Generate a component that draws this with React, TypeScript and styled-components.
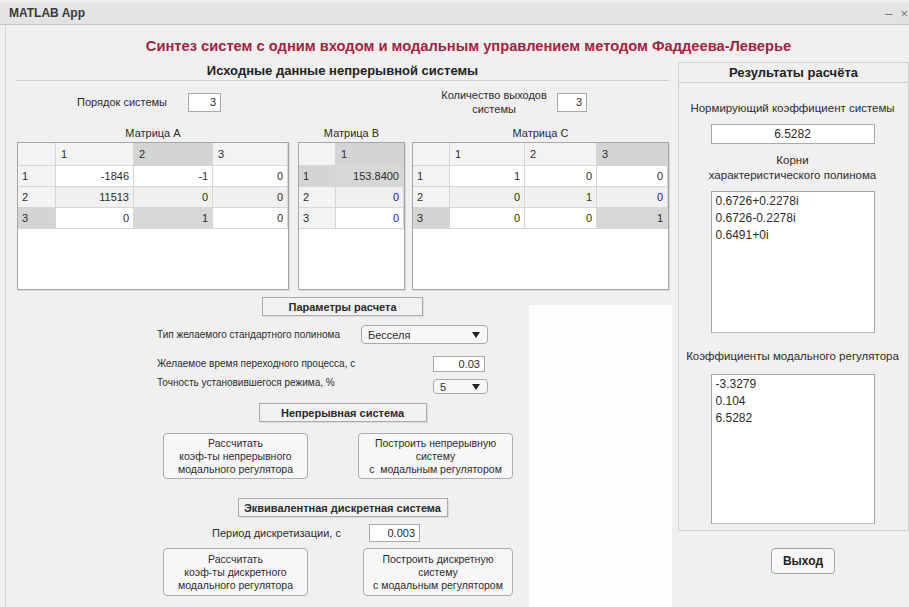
import styled, { createGlobalStyle } from "styled-components";

const GlobalStyle = createGlobalStyle`
  html, body {
    margin: 0;
    padding: 0;
    background: #f0f0f0;
  }
  body {
    font-family: "Liberation Sans", Arial, sans-serif;
    color: #262626;
  }
`;

type MatrixProps = {
  title: string;
  widths: number[];
  values: string[][];
  sel: [number, number];
};

const matrixA = [
  ["-1846", "-1", "0"],
  ["11513", "0", "0"],
  ["0", "1", "0"],
];
const matrixB = [["153.8400"], ["0"], ["0"]];
const matrixC = [
  ["1", "0", "0"],
  ["0", "1", "0"],
  ["0", "0", "1"],
];

const roots = ["0.6726+0.2278i", "0.6726-0.2278i", "0.6491+0i"];
const gains = ["-3.3279", "0.104", "6.5282"];

function Matrix({ title, widths, values, sel }: MatrixProps) {
  const cols = widths.map((w) => `${w}px`).join(" ");
  return (
    <MatrixBlock>
      <MatrixTitle>{title}</MatrixTitle>
      <TableBox $w={widths.reduce((a, b) => a + b, 0) + 2}>
        <TableGrid $cols={cols}>
          <HeadCell $hl={false} />
          {values[0].map((_, c) => (
            <HeadCell key={c} $hl={sel[1] === c}>
              {c + 1}
            </HeadCell>
          ))}
          {values.map((row, r) => (
            <RowFragment key={r}>
              <RowHead $hl={sel[0] === r}>{r + 1}</RowHead>
              {row.map((v, c) => (
                <DataCell
                  key={c}
                  $striped={r % 2 === 1}
                  $hl={sel[0] === r && sel[1] === c}
                >
                  {v}
                </DataCell>
              ))}
            </RowFragment>
          ))}
        </TableGrid>
      </TableBox>
    </MatrixBlock>
  );
}

export default function App() {
  return (
    <Window>
      <GlobalStyle />
      <TitleBar>
        <span>MATLAB App</span>
        <WinControls>
          <span>–</span>
          <span>×</span>
        </WinControls>
      </TitleBar>
      <Body>
        <AppTitle>
          Синтез систем с одним входом и модальным управлением методом
          Фаддеева-Леверье
        </AppTitle>
        <Columns>
          <LeftPanel>
            <LeftHeader>Исходные данные непрерывной системы</LeftHeader>
            <SizeRow>
              <Label>Порядок системы</Label>
              <NumField $w={33} $ml={21}>
                3
              </NumField>
              <TwoLineLabel>
                Количество выходов
                <br />
                системы
              </TwoLineLabel>
              <NumField $w={30} $ml={8}>
                3
              </NumField>
            </SizeRow>
            <MatrixRow>
              <Matrix
                title="Матрица A"
                widths={[38, 78, 79, 75]}
                values={matrixA}
                sel={[2, 1]}
              />
              <Matrix
                title="Матрица B"
                widths={[37, 68]}
                values={matrixB}
                sel={[0, 0]}
              />
              <Matrix
                title="Матрица C"
                widths={[37, 75, 72, 71]}
                values={matrixC}
                sel={[2, 2]}
              />
            </MatrixRow>

            <SectionTag $w={161} $mt={7}>
              Параметры расчета
            </SectionTag>
            <FormRow $mt={9} $h={19}>
              <Label $small>Тип желаемого стандартного полинома</Label>
              <Dropdown $w={127} $h={19}>
                Бесселя
                <Caret />
              </Dropdown>
            </FormRow>
            <FormRow $mt={12} $h={16}>
              <Label $small>Желаемое время переходного процесса, с</Label>
              <NumField $w={52} $h={16} $mr={3}>
                0.03
              </NumField>
            </FormRow>
            <FormRow $mt={4} $h={18}>
              <Label $small $top>
                Точность установившегося режима, %
              </Label>
              <Dropdown $w={55} $h={15}>
                5
                <Caret />
              </Dropdown>
            </FormRow>

            <SectionTag $w={168} $mt={9}>
              Непрерывная система
            </SectionTag>
            <ButtonRow $mt={11}>
              <ActionButton $w={145} $h={46}>
                Рассчитать
                <br />
                коэф-ты непрерывного
                <br />
                модального регулятора
              </ActionButton>
              <ActionButton $w={155} $h={46} $ml={50}>
                Построить непрерывную
                <br />
                систему
                <br />с&nbsp; модальным регулятором
              </ActionButton>
            </ButtonRow>

            <SectionTag $w={210} $mt={19}>
              Эквивалентная дискретная система
            </SectionTag>
            <PeriodRow>
              <Label>Период дискретизации, с</Label>
              <NumField $w={51} $h={18} $ml={29}>
                0.003
              </NumField>
            </PeriodRow>
            <ButtonRow $mt={6}>
              <ActionButton $w={145} $h={48}>
                Рассчитать
                <br />
                коэф-ты дискретного
                <br />
                модального регулятора
              </ActionButton>
              <ActionButton $w={150} $h={48} $ml={55}>
                Построить дискретную
                <br />
                систему
                <br />с модальным регулятором
              </ActionButton>
            </ButtonRow>
          </LeftPanel>

          <RightColumn>
            <ResultsPanel>
              <ResultsHeader>Результаты расчёта</ResultsHeader>
              <ResultLabel $mt={18}>Нормирующий коэффициент системы</ResultLabel>
              <ValueField>6.5282</ValueField>
              <ResultLabel $mt={9}>
                Корни
                <br />
                характеристического полинома
              </ResultLabel>
              <ListBox $h={142} $mt={8}>
                {roots.map((r) => (
                  <ListItem key={r}>{r}</ListItem>
                ))}
              </ListBox>
              <ResultLabel $mt={16}>Коэффициенты модального регулятора</ResultLabel>
              <ListBox $h={150} $mt={10}>
                {gains.map((g) => (
                  <ListItem key={g}>{g}</ListItem>
                ))}
              </ListBox>
            </ResultsPanel>
            <ExitButton>Выход</ExitButton>
          </RightColumn>
        </Columns>
      </Body>
      <BlankPatch />
    </Window>
  );
}

const Window = styled.div`
  position: relative;
  width: 909px;
  height: 607px;
  overflow: hidden;
  display: flex;
  flex-direction: column;
  background: #f0f0f0;
`;

const TitleBar = styled.div`
  flex: none;
  box-sizing: border-box;
  height: 25px;
  padding: 2px 0 0 9px;
  display: flex;
  align-items: center;
  justify-content: space-between;
  background: linear-gradient(#f0f0f0, #e4e4e4 20%, #e2e2e2);
  border-bottom: 1px solid #c4c4c4;
  font-size: 12px;
  font-weight: bold;
  color: #3a3a3a;
`;

const WinControls = styled.div`
  display: flex;
  gap: 8px;
  margin-right: 1px;
  font-size: 13px;
  font-weight: normal;
  color: #777;
`;

const Body = styled.div`
  flex: 1;
  margin-left: 5px;
  padding-left: 10px;
  border-left: 1px solid #d6d6d6;
  display: flex;
  flex-direction: column;
`;

const AppTitle = styled.div`
  margin-top: 11px;
  height: 20px;
  line-height: 20px;
  text-align: center;
  padding-left: 12px;
  font-size: 14.7px;
  font-weight: bold;
  color: #a6223f;
  white-space: nowrap;
`;

const Columns = styled.div`
  margin-top: 6px;
  display: flex;
  gap: 9px;
`;

const LeftPanel = styled.div`
  width: 655px;
  display: flex;
  flex-direction: column;
`;

const LeftHeader = styled.div`
  height: 18px;
  line-height: 18px;
  text-align: center;
  font-size: 13px;
  font-weight: bold;
  color: #222;
  border-bottom: 1px solid #cfcfcf;
`;

const Label = styled.span<{ $top?: boolean; $small?: boolean }>`
  font-size: ${(p) => (p.$small ? 10 : 11)}px;
  line-height: 14px;
  color: #2c2c2c;
  white-space: nowrap;
  align-self: ${(p) => (p.$top ? "flex-start" : "center")};
`;

const SizeRow = styled.div`
  margin-top: 11px;
  height: 20px;
  padding-left: 61px;
  display: flex;
  align-items: center;
`;

const TwoLineLabel = styled.div`
  width: 110px;
  margin-left: 218px;
  font-size: 11px;
  line-height: 14px;
  text-align: center;
  color: #2c2c2c;
`;

const NumField = styled.div<{ $w: number; $h?: number; $ml?: number; $mr?: number }>`
  box-sizing: border-box;
  width: ${(p) => p.$w}px;
  height: ${(p) => p.$h ?? 19}px;
  margin-left: ${(p) => p.$ml ?? 0}px;
  margin-right: ${(p) => p.$mr ?? 0}px;
  padding-right: 4px;
  display: flex;
  align-items: center;
  justify-content: flex-end;
  background: #fff;
  border: 1px solid #a9a9a9;
  font-size: 11px;
  color: #2c2c2c;
`;

const MatrixRow = styled.div`
  margin-top: 14px;
  padding-left: 1px;
  display: flex;
  gap: 9px;
  & > div:last-child {
    margin-left: -2px;
  }
`;

const MatrixBlock = styled.div`
  display: flex;
  flex-direction: column;
  gap: 2px;
`;

const MatrixTitle = styled.div`
  height: 14px;
  line-height: 14px;
  text-align: center;
  font-size: 11px;
  color: #2c2c2c;
`;

const TableBox = styled.div<{ $w: number }>`
  box-sizing: border-box;
  width: ${(p) => p.$w}px;
  height: 148px;
  background: #fff;
  border: 1px solid #a6a6a6;
  box-shadow: 1px 1px 0 #d9d9d9;
`;

const TableGrid = styled.div<{ $cols: string }>`
  display: grid;
  grid-template-columns: ${(p) => p.$cols};
  grid-template-rows: 23px repeat(3, 21px);
  font-size: 11px;
  color: #2c2c2c;
`;

const RowFragment = styled.div`
  display: contents;
`;

const cellBase = `
  box-sizing: border-box;
  display: flex;
  align-items: center;
  border-right: 1px solid #d6d6d6;
  border-bottom: 1px solid #d6d6d6;
  white-space: nowrap;
  overflow: hidden;
`;

const HeadCell = styled.div<{ $hl: boolean }>`
  ${cellBase}
  padding-left: 5px;
  background: ${(p) => (p.$hl ? "#d4d4d4" : "#f3f3f3")};
`;

const RowHead = styled.div<{ $hl: boolean }>`
  ${cellBase}
  padding-left: 4px;
  background: ${(p) => (p.$hl ? "#d4d4d4" : "#f3f3f3")};
`;

const DataCell = styled.div<{ $striped: boolean; $hl: boolean }>`
  ${cellBase}
  justify-content: flex-end;
  padding-right: 4px;
  background: ${(p) => (p.$hl ? "#d7d7d7" : p.$striped ? "#f0f0f0" : "#fff")};
`;

const SectionTag = styled.div<{ $w: number; $mt: number }>`
  box-sizing: border-box;
  align-self: center;
  width: ${(p) => p.$w}px;
  height: 19px;
  margin-top: ${(p) => p.$mt}px;
  display: flex;
  align-items: center;
  justify-content: center;
  background: #f2f2f2;
  border: 1px solid #ababab;
  box-shadow: 1px 1px 0 #dcdcdc;
  font-size: 11px;
  font-weight: bold;
  color: #2a2a2a;
`;

const FormRow = styled.div<{ $mt: number; $h: number }>`
  width: 331px;
  height: ${(p) => p.$h}px;
  margin-top: ${(p) => p.$mt}px;
  margin-left: 141px;
  display: flex;
  align-items: center;
  justify-content: space-between;
`;

const Dropdown = styled.div<{ $w: number; $h: number }>`
  box-sizing: border-box;
  width: ${(p) => p.$w}px;
  height: ${(p) => p.$h}px;
  padding: 0 7px 0 6px;
  display: flex;
  align-items: center;
  justify-content: space-between;
  align-self: flex-end;
  background: #f6f6f6;
  border: 1px solid #a9a9a9;
  border-radius: 4px;
  font-size: 11px;
  color: #2c2c2c;
`;

const Caret = styled.span`
  width: 0;
  height: 0;
  border-left: 4px solid transparent;
  border-right: 4px solid transparent;
  border-top: 6px solid #222;
`;

const ButtonRow = styled.div<{ $mt: number }>`
  margin-top: ${(p) => p.$mt}px;
  margin-left: 147px;
  display: flex;
`;

const ActionButton = styled.button<{ $w: number; $h: number; $ml?: number }>`
  box-sizing: border-box;
  width: ${(p) => p.$w}px;
  height: ${(p) => p.$h}px;
  margin-left: ${(p) => p.$ml ?? 0}px;
  padding: 0;
  background: #f7f7f7;
  border: 1px solid #acacac;
  border-radius: 4px;
  font-family: inherit;
  font-size: 10.5px;
  line-height: 13px;
  color: #2c2c2c;
  text-align: center;
`;

const PeriodRow = styled.div`
  margin-top: 7px;
  margin-left: 196px;
  height: 18px;
  display: flex;
  align-items: center;
  & > span {
    width: 128px;
  }
`;

const RightColumn = styled.div`
  display: flex;
  flex-direction: column;
`;

const ResultsPanel = styled.div`
  box-sizing: border-box;
  width: 231px;
  height: 469px;
  display: flex;
  flex-direction: column;
  align-items: center;
  padding-right: 2px;
  border: 1px solid #d2d2d2;
`;

const ResultsHeader = styled.div`
  align-self: stretch;
  margin-right: -2px;
  height: 19px;
  line-height: 19px;
  text-align: center;
  font-size: 13px;
  font-weight: bold;
  color: #222;
  border-bottom: 1px solid #d2d2d2;
`;

const ResultLabel = styled.div<{ $mt: number }>`
  margin-top: ${(p) => p.$mt}px;
  font-size: 11.5px;
  line-height: 15px;
  text-align: center;
  color: #2c2c2c;
  white-space: nowrap;
`;

const ValueField = styled.div`
  box-sizing: border-box;
  width: 164px;
  height: 20px;
  margin-top: 8px;
  display: flex;
  align-items: center;
  justify-content: center;
  background: #fff;
  border: 1px solid #a9a9a9;
  font-size: 12px;
  color: #2c2c2c;
`;

const ListBox = styled.div<{ $h: number; $mt: number }>`
  box-sizing: border-box;
  width: 164px;
  height: ${(p) => p.$h}px;
  margin-top: ${(p) => p.$mt}px;
  padding: 1px 4px;
  background: #fff;
  border: 1px solid #a3a3a3;
  border-bottom-color: #bdbdbd;
`;

const ListItem = styled.div`
  font-size: 12px;
  line-height: 17px;
  color: #2c2c2c;
`;

const ExitButton = styled.button`
  box-sizing: border-box;
  width: 64px;
  height: 26px;
  margin: 17px 0 0 93px;
  padding: 0;
  background: #f7f7f7;
  border: 1px solid #a6a6a6;
  border-radius: 4px;
  font-family: inherit;
  font-size: 12px;
  font-weight: bold;
  color: #222;
`;

// unfilled region of the form canvas
const BlankPatch = styled.div`
  position: absolute;
  left: 529px;
  top: 305px;
  width: 143px;
  height: 302px;
  background: #fdfdfd;
`;
